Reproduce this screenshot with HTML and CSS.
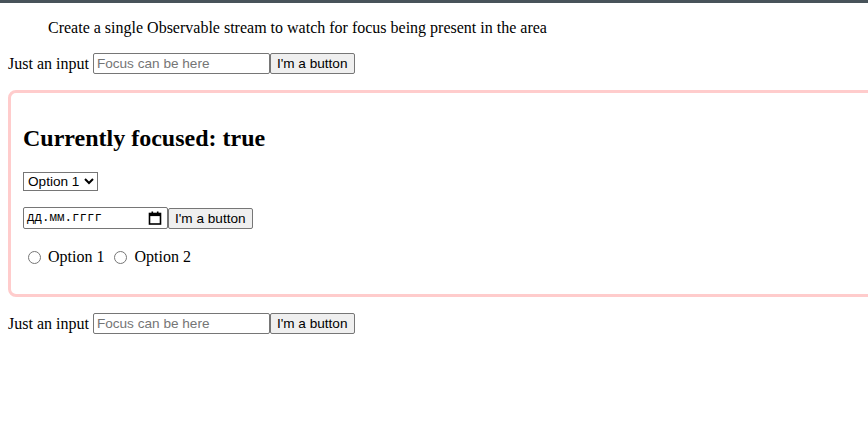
FILE: index.html
```html
<!DOCTYPE html>
<html lang="en">
<head>
<meta charset="utf-8">
<title>Focus area</title>
<link rel="stylesheet" href="styles.css">
</head>
<body>
<div class="topbar"></div>
<div class="page">
  <blockquote class="intro">Create a single Observable stream to watch for focus being present in the area</blockquote>
  <div class="row">Just an input <input class="text-input" type="text" placeholder="Focus can be here"><button class="btn" type="button">I'm a button</button></div>
  <div class="area">
    <h2 class="title">Currently focused: true</h2>
    <div class="select-row">
      <select class="sel"><option>Option 1</option><option>Option 2</option></select>
    </div>
    <div class="date-row">
      <span class="date-input"><span class="date-text">дд.мм.гггг</span><svg class="cal" width="14" height="14" viewBox="0 0 14 14"><rect x="1.5" y="2.5" width="11" height="10.5" fill="none" stroke="#000" stroke-width="1.6"/><rect x="1.5" y="2.5" width="11" height="2.6" fill="#000"/><rect x="3.5" y="0.5" width="1.6" height="3" fill="#000"/><rect x="8.9" y="0.5" width="1.6" height="3" fill="#000"/></svg></span><button class="btn" type="button">I'm a button</button>
    </div>
    <div class="radio-row">
      <label class="radio"><input type="radio" name="opt"> Option 1</label>
      <label class="radio"><input type="radio" name="opt"> Option 2</label>
    </div>
  </div>
  <div class="row">Just an input <input class="text-input" type="text" placeholder="Focus can be here"><button class="btn" type="button">I'm a button</button></div>
</div>
</body>
</html>
```
FILE: styles.css
```css
html, body {
  margin: 0;
  padding: 0;
  overflow: hidden;
  background: #fff;
}
body {
  font-family: "Liberation Serif", "Times New Roman", serif;
  font-size: 16px;
  color: #000;
}
.topbar {
  height: 3px;
  background: #48535a;
}
.page {
  padding: 0 8px;
}
.intro {
  margin: 16px 40px;
}
.row {
  margin: 0;
  height: 21px;
  line-height: 21px;
  display: flex;
  align-items: center;
  white-space: pre;
}
.text-input {
  box-sizing: border-box;
  width: 177px;
  height: 21px;
  margin: 0;
  padding: 1px 3px;
  border: 1px solid #767676;
  border-radius: 2px;
  font-family: "Liberation Sans", Arial, sans-serif;
  font-size: 13.6px;
}
.text-input::placeholder {
  color: #757575;
}
.btn {
  box-sizing: border-box;
  height: 21px;
  margin: 0;
  padding: 1px 6px;
  border: 1px solid #767676;
  border-radius: 2px;
  background: #efefef;
  color: #000;
  font-family: "Liberation Sans", Arial, sans-serif;
  font-size: 13.6px;
  line-height: 17px;
}
.area {
  margin: 16px 0;
  width: 100%;
  padding: 12px;
  border: 3px solid #ffcccc;
  border-radius: 8px;
}
.title {
  margin: 19px 0 20px;
  font-size: 24px;
  font-weight: bold;
  line-height: 28px;
}
.select-row {
  height: 19px;
}
.sel {
  box-sizing: border-box;
  width: 75px;
  height: 19px;
  margin: 0;
  padding: 0;
  border: 1px solid #767676;
  border-radius: 0;
  background: #fff;
  font-family: "Liberation Sans", Arial, sans-serif;
  font-size: 13.6px;
  color: #000;
}
.date-row {
  margin-top: 16px;
  display: flex;
  align-items: center;
  height: 22px;
}
.date-input {
  box-sizing: border-box;
  width: 145px;
  height: 22px;
  display: inline-flex;
  align-items: center;
  justify-content: space-between;
  padding: 0 5px 0 3px;
  border: 1px solid #767676;
  border-radius: 2px;
}
.date-text {
  font-family: "Liberation Mono", "DejaVu Sans Mono", monospace;
  font-size: 12.5px;
  color: #000;
}
.cal {
  display: block;
}
.radio-row {
  margin: 19px 0 16px;
  height: 18px;
  display: flex;
  align-items: center;
}
.radio {
  display: inline-flex;
  align-items: center;
  margin-right: 5px;
}
.radio input {
  width: 13px;
  height: 13px;
  margin: 0 7px 0 5px;
}
```
